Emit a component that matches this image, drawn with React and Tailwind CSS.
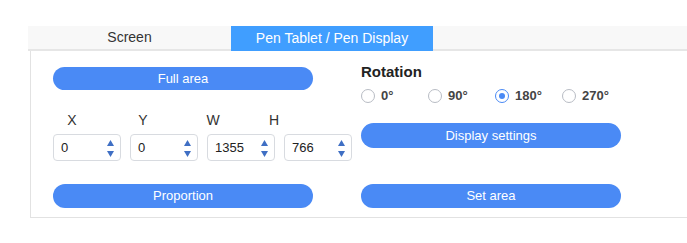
import React from "react";

const font = { fontFamily: '"Liberation Sans", Arial, sans-serif' };

function Btn({ children, className = "" }) {
  return (
    <div
      className={
        "w-[260px] rounded-full bg-[#4a8af5] text-[13px] text-white flex items-center justify-center " +
        className
      }
    >
      {children}
    </div>
  );
}

function NumInput({ value }) {
  return (
    <div className="relative w-[68px] h-[27px] rounded-[4px] border border-[#d8dbe0] bg-white flex items-center pl-[7px] text-[13px] text-[#222]">
      {value}
      <div className="absolute right-[6px] top-[5px] flex flex-col gap-[5px]">
        <svg width="7" height="6" viewBox="0 0 7 6">
          <path d="M3.5 0 L7 6 L0 6 Z" fill="#3f6fc4" />
        </svg>
        <svg width="7" height="6" viewBox="0 0 7 6">
          <path d="M0 0 L7 0 L3.5 6 Z" fill="#3f6fc4" />
        </svg>
      </div>
    </div>
  );
}

function Radio({ label, checked }) {
  return (
    <div className="w-[67px] flex items-center gap-[6px]">
      <div
        className={
          "w-[14px] h-[14px] rounded-full border flex items-center justify-center bg-white " +
          (checked ? "border-[#4a8af5]" : "border-[#b8bcc4]")
        }
      >
        {checked && <div className="w-[6px] h-[6px] rounded-full bg-[#4a8af5]" />}
      </div>
      <span className="text-[13px] font-bold text-[#444]">{label}</span>
    </div>
  );
}

export default function App() {
  return (
    <div className="w-[687px] h-[243px] bg-white overflow-hidden" style={font}>
      <div className="pt-[26px]">
        <div className="ml-[28px] h-[25px] bg-[#f8f8f8] border-b-2 border-[#e6e6e6] flex">
          <div className="w-[203px] flex items-center justify-center text-[14px] text-[#333]">
            Screen
          </div>
          <div className="w-[202px] -mb-[2px] bg-[#409eff] flex items-center justify-center text-[14px] text-white">
            Pen Tablet / Pen Display
          </div>
        </div>
        <div className="ml-[30px] h-[167px] border-l border-b border-[#e2e2e2] flex">
          <div className="w-[330px] pl-[22px] pt-[16px] flex flex-col">
            <Btn className="h-[23px]">Full area</Btn>
            <div className="mt-[22px] h-[16px] flex text-[14px] text-[#333] leading-[16px]">
              <span className="w-[38px] text-center">X</span>
              <span className="w-[38px] ml-[33px] text-center">Y</span>
              <span className="w-[38px] ml-[32px] text-center">W</span>
              <span className="w-[38px] ml-[23px] text-center">H</span>
            </div>
            <div className="mt-[6px] flex gap-[9px]">
              <NumInput value="0" />
              <NumInput value="0" />
              <NumInput value="1355" />
              <NumInput value="766" />
            </div>
            <Btn className="h-[24px] mt-[23px]">Proportion</Btn>
          </div>
          <div className="pt-[13px] flex flex-col">
            <div className="h-[16px] leading-[16px] text-[15px] font-bold text-[#222]">Rotation</div>
            <div className="mt-[8px] h-[16px] flex items-center">
              <Radio label="0°" />
              <Radio label="90°" />
              <Radio label="180°" checked />
              <Radio label="270°" />
            </div>
            <Btn className="h-[25px] mt-[19px]">Display settings</Btn>
            <Btn className="h-[24px] mt-[36px]">Set area</Btn>
          </div>
        </div>
      </div>
    </div>
  );
}
